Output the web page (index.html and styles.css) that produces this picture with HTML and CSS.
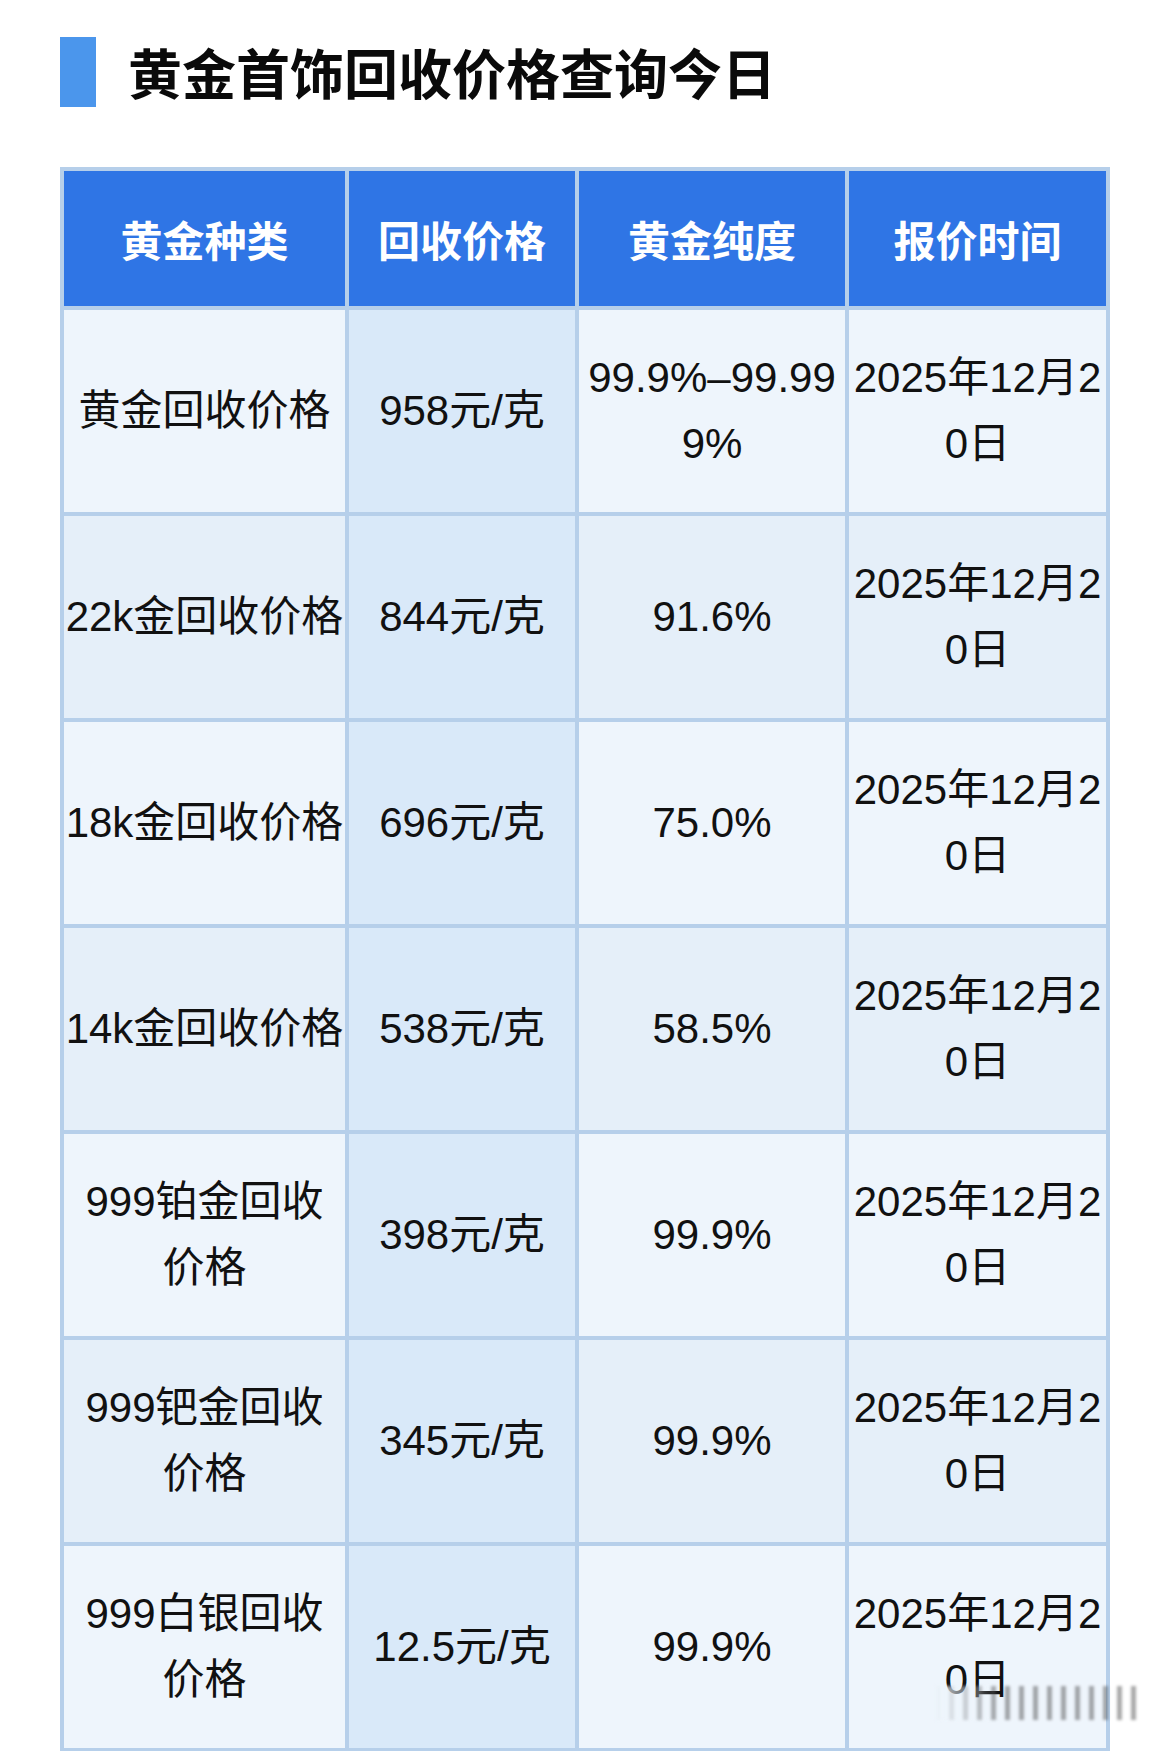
FILE: index.html
```html
<!DOCTYPE html>
<html lang="zh-CN">
<head>
<meta charset="utf-8">
<title>黄金首饰回收价格查询今日</title>
<link rel="stylesheet" href="styles.css">
</head>
<body>
<div class="page">
  <div class="title-row">
    <span class="title-bar"></span>
    <h1 class="title">黄金首饰回收价格查询今日</h1>
  </div>
  <table class="price-table">
    <colgroup>
      <col class="c1"><col class="c2"><col class="c3"><col class="c4">
    </colgroup>
    <thead>
      <tr><th>黄金种类</th><th>回收价格</th><th>黄金纯度</th><th>报价时间</th></tr>
    </thead>
    <tbody>
      <tr class="odd"><td>黄金回收价格</td><td class="price">958元/克</td><td>99.9%–99.999%</td><td>2025年12月20日</td></tr>
      <tr class="even"><td>22k金回收价格</td><td class="price">844元/克</td><td>91.6%</td><td>2025年12月20日</td></tr>
      <tr class="odd"><td>18k金回收价格</td><td class="price">696元/克</td><td>75.0%</td><td>2025年12月20日</td></tr>
      <tr class="even"><td>14k金回收价格</td><td class="price">538元/克</td><td>58.5%</td><td>2025年12月20日</td></tr>
      <tr class="odd"><td>999铂金回收<br>价格</td><td class="price">398元/克</td><td>99.9%</td><td>2025年12月20日</td></tr>
      <tr class="even"><td>999钯金回收<br>价格</td><td class="price">345元/克</td><td>99.9%</td><td>2025年12月20日</td></tr>
      <tr class="odd"><td>999白银回收<br>价格</td><td class="price">12.5元/克</td><td>99.9%</td><td class="last-cell">2025年12月20日<span class="watermark" aria-hidden="true"></span></td></tr>
    </tbody>
  </table>
</div>
</body>
</html>
```

FILE: styles.css
```css
html, body {
  margin: 0;
  padding: 0;
  background: #ffffff;
}

.page {
  padding: 37px 64px 0 60px;
  font-family: "Liberation Sans", "Noto Sans CJK SC", sans-serif;
  color: #111111;
}

.title-row {
  display: flex;
  align-items: center;
  gap: 32px;
  height: 70px;
}

.title-bar {
  width: 36px;
  height: 70px;
  background: #4b96ec;
  flex: none;
}

.title {
  margin: 0;
  font-family: "Noto Sans CJK SC", sans-serif;
  font-weight: 700;
  font-size: 54px;
  line-height: 70px;
  color: #0a0a0a;
}

.price-table {
  margin-top: 60px;
  width: 1046px;
  table-layout: fixed;
  border-collapse: collapse;
  border: 4px solid #b6cfea;
}

.c1 { width: 285px; }
.c2 { width: 230px; }
.c3 { width: 270px; }
.c4 { width: 261px; }

.price-table th,
.price-table td {
  border: 4px solid #b6cfea;
  text-align: center;
  vertical-align: middle;
  padding: 0;
  word-break: break-all;
}

.price-table th {
  height: 135px;
  background: #2f75e5;
  color: #ffffff;
  font-family: "Noto Sans CJK SC", sans-serif;
  font-weight: 700;
  font-size: 42px;
  line-height: 60px;
}

.price-table td {
  height: 202px;
  font-size: 42px;
  line-height: 66px;
  font-weight: 400;
}

.price-table tr.odd td { background: #eef5fc; }
.price-table tr.even td { background: #e5eff9; }
.price-table tr td.price { background: #d9e9f9; }

.last-cell {
  position: relative;
}

.watermark {
  position: absolute;
  left: 86px;
  top: 140px;
  width: 210px;
  height: 34px;
  background:
    linear-gradient(90deg, rgba(238,245,252,1) 0%, rgba(238,245,252,0) 30%, rgba(238,245,252,0) 100%),
    repeating-linear-gradient(90deg, rgba(60,60,60,0.55) 0 5px, rgba(60,60,60,0) 5px 14px);
  filter: blur(1.5px);
  opacity: 0.8;
}
```
